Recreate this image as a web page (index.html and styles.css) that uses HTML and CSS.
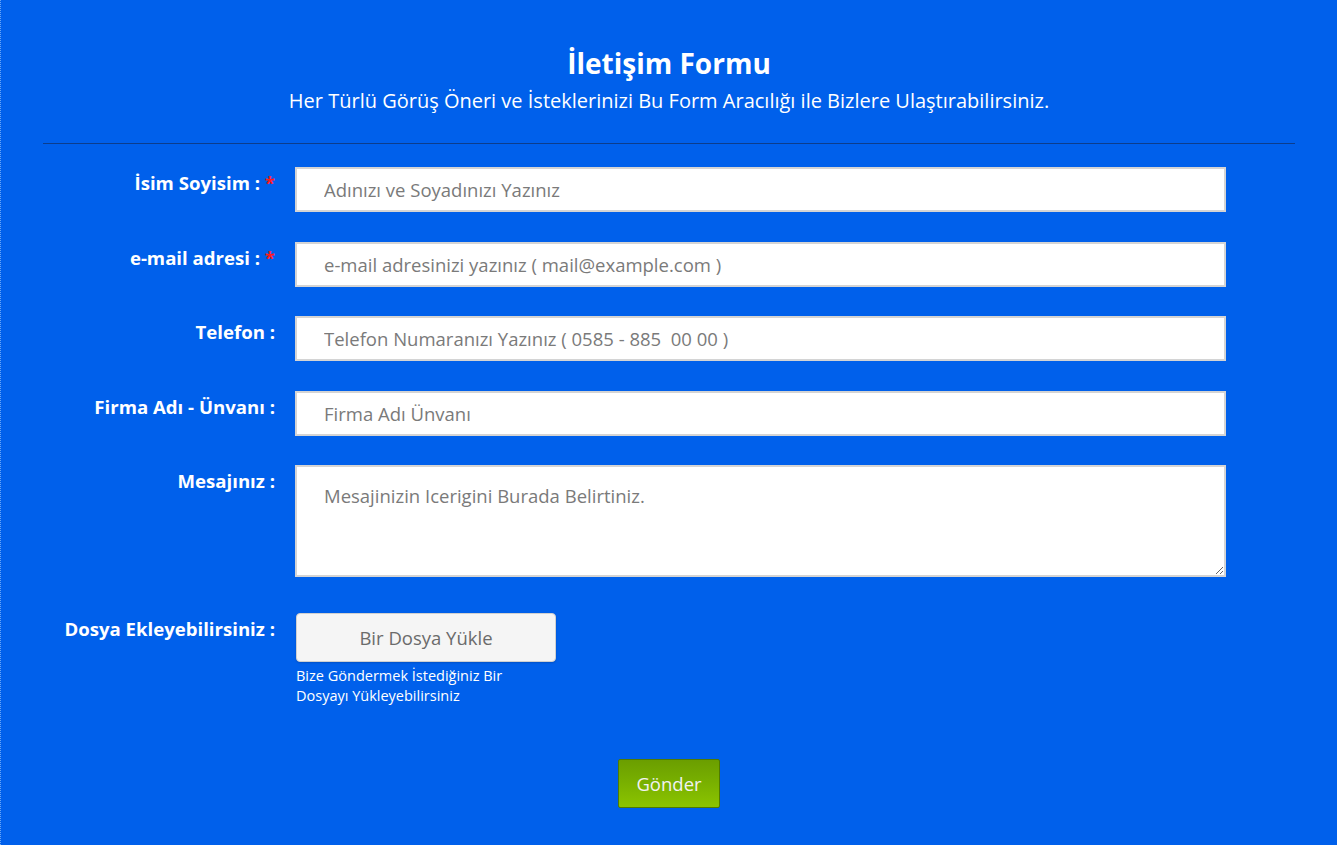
FILE: index.html
```html
<!DOCTYPE html>
<html lang="tr">
<head>
<meta charset="utf-8">
<title>İletişim Formu</title>
<link rel="stylesheet" href="styles.css">
</head>
<body>
<div class="page">
  <header class="head">
    <h1 class="title">İletişim Formu</h1>
    <p class="subtitle">Her Türlü Görüş Öneri ve İsteklerinizi Bu Form Aracılığı ile Bizlere Ulaştırabilirsiniz.</p>
  </header>
  <hr class="divider">
  <form class="form">
    <div class="row">
      <label class="label">İsim Soyisim : <span class="req">*</span></label>
      <div class="field"><input class="input" type="text" placeholder="Adınızı ve Soyadınızı Yazınız"></div>
    </div>
    <div class="row">
      <label class="label">e-mail adresi : <span class="req">*</span></label>
      <div class="field"><input class="input" type="text" placeholder="e-mail adresinizi yazınız ( mail@example.com )"></div>
    </div>
    <div class="row">
      <label class="label">Telefon :</label>
      <div class="field"><input class="input" type="text" placeholder="Telefon Numaranızı Yazınız ( 0585 - 885&nbsp; 00 00 )"></div>
    </div>
    <div class="row">
      <label class="label">Firma Adı - Ünvanı :</label>
      <div class="field"><input class="input" type="text" placeholder="Firma Adı Ünvanı"></div>
    </div>
    <div class="row row-msg">
      <label class="label">Mesajınız :</label>
      <div class="field"><textarea class="textarea" placeholder="Mesajinizin Icerigini Burada Belirtiniz."></textarea></div>
    </div>
    <div class="row row-file">
      <label class="label">Dosya Ekleyebilirsiniz :</label>
      <div class="field">
        <button type="button" class="file-btn">Bir Dosya Yükle</button>
        <p class="help">Bize Göndermek İstediğiniz Bir<br>Dosyayı Yükleyebilirsiniz</p>
      </div>
    </div>
    <div class="actions">
      <button type="button" class="submit">Gönder</button>
    </div>
  </form>
</div>
</body>
</html>
```
FILE: styles.css
```css
* { box-sizing: border-box; }
html, body { margin: 0; padding: 0; }
body {
  background: #0060eb;
  font-family: "Open Sans", "Noto Sans", sans-serif;
  color: #fff;
}
.page {
  min-height: 845px;
  border-left: 1px dotted #6aa5f5;
  padding-top: 44px;
}
.head { text-align: center; }
.title {
  margin: 0;
  font-size: 28px;
  line-height: 38px;
  font-weight: 700;
}
.subtitle {
  margin: 5px 0 0;
  font-size: 20px;
  line-height: 28px;
  font-weight: 400;
}
.divider {
  margin: 28px 42px 0;
  border: 0;
  border-top: 1px solid #0c3d8c;
  height: 0;
}
.form { padding-top: 23px; }
.row {
  display: grid;
  grid-template-columns: 294px 931px;
  margin-bottom: 29.5px;
}
.label {
  text-align: right;
  padding-right: 20px;
  padding-top: 3px;
  font-size: 18.6px;
  line-height: 26px;
  font-weight: 700;
}
.req { color: #ff1a1a; }
.input, .textarea {
  display: block;
  width: 100%;
  height: 45px;
  border: 2px solid #d4d4d4;
  background: #fff;
  padding: 0 0 0 27px;
  font-family: "Open Sans", "Noto Sans", sans-serif;
  font-size: 18.5px;
  color: #555;
  outline: none;
}
.textarea {
  height: 112px;
  padding: 16px 27px;
  resize: vertical;
  line-height: 26px;
}
.input::placeholder, .textarea::placeholder { color: #7a7a7a; opacity: 1; }
.row-msg { margin-bottom: 36px; }
.row-file { margin-bottom: 0; }
.file-btn {
  display: block;
  width: 260px;
  height: 49px;
  margin-left: 1px;
  background: #f5f5f5;
  border: 1px solid #d0d0d0;
  border-radius: 4px;
  box-shadow: 0 1px 2px rgba(0,0,0,0.15);
  font-family: "Open Sans", "Noto Sans", sans-serif;
  font-size: 18.5px;
  color: #6b6b6b;
  cursor: pointer;
}
.help {
  margin: 4px 0 0 1px;
  font-size: 14.5px;
  line-height: 20px;
  color: #fff;
}
.actions {
  display: flex;
  justify-content: center;
  padding-top: 53px;
}
.submit {
  width: 102px;
  height: 49px;
  background: linear-gradient(#6b9e00 0%, #76ad00 40%, #8bc400 100%);
  border: 1px solid #4f7a00;
  border-radius: 2px;
  color: #f2f2f2;
  font-family: "Open Sans", "Noto Sans", sans-serif;
  font-size: 18.5px;
  cursor: pointer;
}
```
